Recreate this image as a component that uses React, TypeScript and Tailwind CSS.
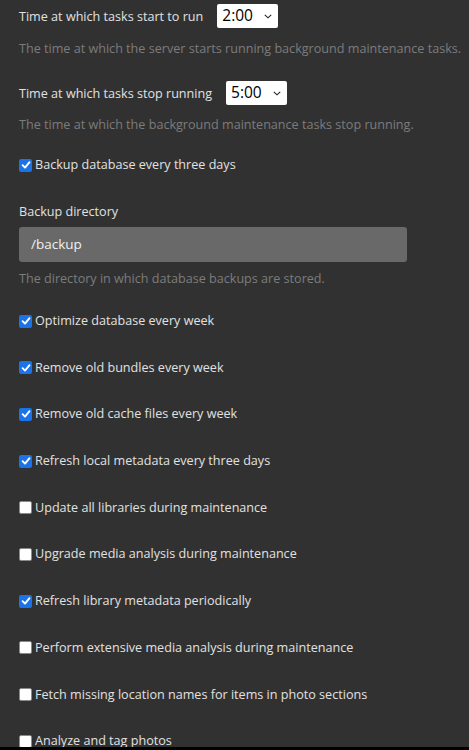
import React from 'react';

interface Task {
  label: string;
  checked: boolean;
}

const tasks: Task[] = [
  { label: 'Optimize database every week', checked: true },
  { label: 'Remove old bundles every week', checked: true },
  { label: 'Remove old cache files every week', checked: true },
  { label: 'Refresh local metadata every three days', checked: true },
  { label: 'Update all libraries during maintenance', checked: false },
  { label: 'Upgrade media analysis during maintenance', checked: false },
  { label: 'Refresh library metadata periodically', checked: true },
  { label: 'Perform extensive media analysis during maintenance', checked: false },
  { label: 'Fetch missing location names for items in photo sections', checked: false },
  { label: 'Analyze and tag photos', checked: false },
];

function Checkbox({ checked }: { checked: boolean }) {
  if (!checked) {
    return <span className="w-[13px] h-[13px] rounded-[2px] bg-white shrink-0 border border-[#8a8a8a]" />;
  }
  return (
    <span className="w-[13px] h-[13px] rounded-[2px] bg-[#1a73e8] shrink-0 flex items-center justify-center">
      <svg width="10" height="10" viewBox="0 0 10 10" fill="none">
        <path d="M1.6 5.2 L4 7.6 L8.5 2.2" stroke="white" strokeWidth="1.9" strokeLinecap="round" strokeLinejoin="round" />
      </svg>
    </span>
  );
}

function TimeSelect({ value }: { value: string }) {
  return (
    <div className="w-[61px] h-[24px] bg-white rounded-[2px] flex items-center justify-between pl-[5px] pr-[6px] text-[15.5px] text-black">
      <span>{value}</span>
      <svg width="8" height="5" viewBox="0 0 8 5" fill="none">
        <path d="M0.8 0.8 L4 3.8 L7.2 0.8" stroke="#222" strokeWidth="1.1" />
      </svg>
    </div>
  );
}

function CheckRow({ task }: { task: Task }) {
  return (
    <label className="flex items-center gap-[3px] h-[20px] leading-[20px] whitespace-nowrap">
      <Checkbox checked={task.checked} />
      <span>{task.label}</span>
    </label>
  );
}

export default function App() {
  return (
    <div
      className="h-[750px] w-[469px] flex flex-col bg-[#313131] text-[#e1e1e1] text-[12.6px]"
      style={{ fontFamily: '"Open Sans", "Noto Sans", sans-serif' }}
    >
      <div className="flex-1 overflow-hidden px-[19px]">
        <div className="flex items-center mt-[4px]">
          <span className="leading-[20px] mt-[2px]">Time at which tasks start to run</span>
          <div className="ml-[14px]">
            <TimeSelect value="2:00" />
          </div>
        </div>
        <p className="mt-[11px] leading-[20px] text-[#7c7c7c] whitespace-nowrap">
          The time at which the server starts running background maintenance tasks.
        </p>

        <div className="flex items-center mt-[22px]">
          <span className="leading-[20px] mt-[2px]">Time at which tasks stop running</span>
          <div className="ml-[14px]">
            <TimeSelect value="5:00" />
          </div>
        </div>
        <p className="mt-[10px] leading-[20px] text-[#7c7c7c] whitespace-nowrap">
          The time at which the background maintenance tasks stop running.
        </p>

        <div className="mt-[20px]">
          <CheckRow task={{ label: 'Backup database every three days', checked: true }} />
        </div>

        <div className="mt-[27px] leading-[20px]">Backup directory</div>
        <div className="mt-[5px] w-[388px] h-[35px] rounded-[3px] bg-[#696969] flex items-center px-[12px] text-[13.5px] text-[#f0f0f0]">
          /backup
        </div>
        <p className="mt-[7px] leading-[20px] text-[#7c7c7c]">
          The directory in which database backups are stored.
        </p>

        <div className="mt-[22px] flex flex-col gap-[26.7px]">
          {tasks.map((task) => (
            <CheckRow key={task.label} task={task} />
          ))}
        </div>
      </div>
      <div className="h-[3px] bg-black shrink-0" />
    </div>
  );
}
